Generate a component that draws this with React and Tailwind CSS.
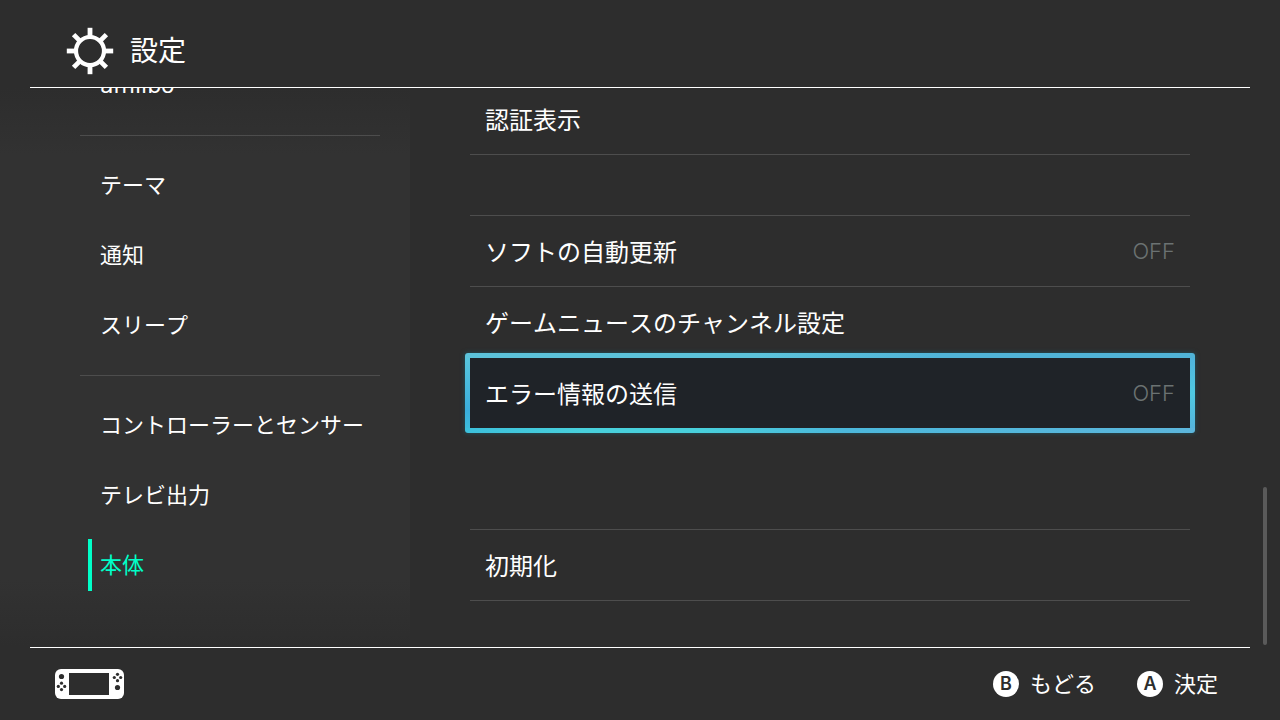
import React from 'react';

const menuGroups = [
  ['amiibo'],
  ['テーマ', '通知', 'スリープ'],
  ['コントローラーとセンサー', 'テレビ出力', '本体'],
];

const settingGroups = [
  { gap: '', items: [{ label: '認証表示' }] },
  {
    gap: 'mt-[60px] border-t',
    items: [
      { label: 'ソフトの自動更新', value: 'OFF' },
      { label: 'ゲームニュースのチャンネル設定' },
      { label: 'エラー情報の送信', value: 'OFF', focused: true },
    ],
  },
  { gap: 'mt-[100px] border-t', items: [{ label: '初期化' }] },
];

const GearIcon = () => (
  <svg width="48" height="48" viewBox="0 0 48 48" fill="none" stroke="#fff" aria-hidden="true">
    <circle cx="24" cy="24" r="14" strokeWidth="4.2" />
    {[0, 45, 90, 135, 180, 225, 270, 315].map((angle) => (
      <path key={angle} d="M24 0.8v8.2" strokeWidth="4.8" transform={`rotate(${angle} 24 24)`} />
    ))}
  </svg>
);

const ConsoleIcon = () => (
  <svg width="69" height="30" viewBox="0 0 69 30" aria-hidden="true">
    <rect width="69" height="30" rx="6" fill="#fff" />
    <g fill="#2d2d2d">
      <rect x="14" y="4" width="40" height="22" />
      <circle cx="6.5" cy="7.5" r="2.6" />
      <circle cx="62.5" cy="18.5" r="2.6" />
      <circle cx="6.5" cy="14.2" r="1.6" />
      <circle cx="6.5" cy="20.6" r="1.6" />
      <circle cx="3.3" cy="17.4" r="1.6" />
      <circle cx="9.7" cy="17.4" r="1.6" />
      <circle cx="62.5" cy="5.3" r="1.6" />
      <circle cx="62.5" cy="11.7" r="1.6" />
      <circle cx="59.3" cy="8.5" r="1.6" />
      <circle cx="65.7" cy="8.5" r="1.6" />
    </g>
  </svg>
);

const SideMenu = ({ current }) => (
  <nav className="flex w-[410px] shrink-0 flex-col justify-end bg-[linear-gradient(#2d2d2d,#323232_12%,#323232_88%,#2d2d2d)] pr-[30px] pb-[47px] pl-20 font-['DejaVu_Sans','Noto_Sans_CJK_JP',sans-serif]">
    {menuGroups.map((group, i) => (
      <ul key={group[0]} className="shrink-0">
        {i > 0 && <li className="mt-[15px] mb-[14px] h-px bg-[#4d4d4d]" />}
        {group.map((label) => (
          <li key={label}>
            <button
              type="button"
              className={`flex h-[70px] w-full items-center text-[22px] ${label === current ? 'text-[#00ffc8]' : ''}`}
            >
              <span className={`ml-2 h-[52px] w-1 ${label === current ? 'bg-[#00ffc8]' : ''}`} />
              <span className="ml-2">{label}</span>
            </button>
          </li>
        ))}
      </ul>
    ))}
  </nav>
);

// glowing frame around the focused row, each edge has its own gradient
const FocusFrame = () => (
  <>
    <span className="absolute -inset-[5px] flex flex-col justify-between overflow-hidden rounded-[3px] shadow-[0_0_5px_#1f5560]">
      <span className="h-[5px] bg-[linear-gradient(to_right,#5cc4dc,#5cc4dc_40%,#50b4d8_65%,#50b4d8)]" />
      <span className="flex flex-1 justify-between">
        <span className="w-[5px] bg-[linear-gradient(#58c6de,#3aaedc_75%,#3cbcdc)]" />
        <span className="w-[5px] bg-[linear-gradient(#50b4dc,#4fcae2_50%,#55b5dc)]" />
      </span>
      <span className="h-[5px] bg-[linear-gradient(to_right,#3cc0dc,#48d0dc_16%,#48d0dc_32%,#4cb8dc_52%,#5cb6dc)]" />
    </span>
    <span className="absolute inset-0 bg-[#1f2328]" />
  </>
);

const SettingRow = ({ label, value, focused }) => (
  <li className="border-b border-[#4d4d4d]">
    <button type="button" className="relative flex h-[70px] w-full items-center justify-between px-[15px]">
      {focused && <FocusFrame />}
      <span className="relative font-['Noto_Sans_CJK_JP',sans-serif] text-2xl">{label}</span>
      {value && <span className="relative text-[22px] font-light text-[#6b7272]">{value}</span>}
    </button>
  </li>
);

const ActionButton = ({ letter, label }) => (
  <button type="button" className="flex items-center gap-[11px]">
    <span className="flex size-[26px] items-center justify-center rounded-full bg-white text-lg font-semibold text-[#2d2d2d]">
      {letter}
    </span>
    <span className="text-[22px]">{label}</span>
  </button>
);

const App = () => {
  return (
    <div className="flex h-screen flex-col bg-[#2d2d2d] font-['Inter','Noto_Sans_CJK_JP',sans-serif] text-white [font-kerning:none]">
      <header className="mx-[30px] flex h-[88px] shrink-0 items-center gap-4 border-b border-white pt-[14px] pl-9">
        <GearIcon />
        <h1 className="text-[28px]">設定</h1>
      </header>

      <main className="flex min-h-0 flex-1 overflow-hidden">
        <SideMenu current="本体" />
        <section className="ml-[60px] flex min-w-0 flex-1 flex-col justify-end pb-[46px]">
          {settingGroups.map((group) => (
            <ul key={group.items[0].label} className={`shrink-0 border-[#4d4d4d] ${group.gap}`}>
              {group.items.map((item) => (
                <SettingRow key={item.label} {...item} />
              ))}
            </ul>
          ))}
        </section>
        <div className="mr-[13px] mb-0.5 ml-[73px] h-[158px] w-1 self-end rounded-full bg-[#5a5a5a]" />
      </main>

      <footer className="mx-[30px] flex h-[73px] shrink-0 items-center justify-between border-t border-white pr-8 pl-[25px]">
        <ConsoleIcon />
        <div className="flex gap-[41px]">
          <ActionButton letter="B" label="もどる" />
          <ActionButton letter="A" label="決定" />
        </div>
      </footer>
    </div>
  );
};

export default App;
